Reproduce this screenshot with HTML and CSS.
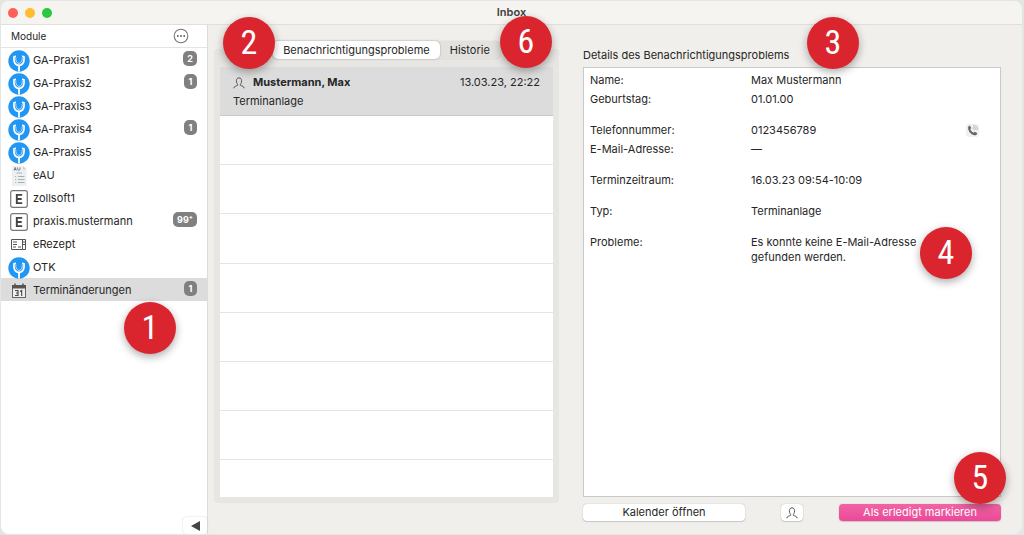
FILE: index.html
```html
<!DOCTYPE html>
<html lang="de">
<head>
<meta charset="utf-8">
<meta name="viewport" content="width=device-width, initial-scale=1">
<title>Inbox</title>
<link rel="stylesheet" href="styles.css">
</head>
<body>
<svg class="sprite" aria-hidden="true">
  <symbol id="otk" viewBox="0 0 22 22">
    <circle cx="11" cy="11" r="10.7" fill="#2196f3"/>
    <path d="M8 5.500L5.300 6C4.600 11 5.600 15.300 10.100 16.300V21.600H11.900V16.300C16.400 15.300 17.400 11 16.700 6L14 5.500V7L15.200 7.400C15.500 11 14.500 13.900 11 14.600C7.500 13.900 6.500 11 6.800 7.400L8 7Z" fill="#fff"/>
    <path d="M7.800 7.500C7.500 10.500 8.500 12.800 11 13.500C13.500 12.800 14.500 10.500 14.200 7.500" fill="none" stroke="#fff" stroke-width=".7"/>
  </symbol>
  <symbol id="person" viewBox="0 0 12 12">
    <path d="M.8 11.300C1 9.200 2.800 9.200 4.700 8.300C5 7.300 3.200 6.200 3.400 3.700C3.500 1.800 4.500.9 6 .9S8.500 1.800 8.600 3.700C8.800 6.200 7 7.300 7.300 8.300C9.200 9.200 11 9.200 11.200 11.300" fill="none" stroke="currentColor" stroke-width="1"/>
  </symbol>
  <symbol id="letter-e" viewBox="0 0 18 18">
    <rect x=".7" y=".7" width="16.600" height="16.600" rx="2" fill="#fff" stroke="#777" stroke-width="1.200"/>
    <path d="M12.200 4.900H6.800V13.100H12.200M6.800 9H11.700" fill="none" stroke="#444" stroke-width="1.900"/>
  </symbol>
</svg>

<div class="window">
  <header class="titlebar">
    <div class="lights">
      <button class="light light-close" aria-label="Schließen"></button>
      <button class="light light-min" aria-label="Minimieren"></button>
      <button class="light light-zoom" aria-label="Zoomen"></button>
    </div>
    <h1 class="title">Inbox</h1>
  </header>

  <div class="body">
    <nav class="sidebar" aria-label="Module">
      <div class="sidebar-head">
        <span>Module</span>
        <button class="more" aria-label="Mehr">
          <svg width="16" height="16" viewBox="0 0 16 16"><circle cx="8" cy="8" r="6.800" fill="none" stroke="#777" stroke-width="1.100"/><g fill="#555"><circle cx="4.800" cy="8" r=".9"/><circle cx="8" cy="8" r=".9"/><circle cx="11.200" cy="8" r=".9"/></g></svg>
        </button>
      </div>
      <ul class="modules">
        <li class="module"><svg class="icon"><use href="#otk"/></svg><span class="name">GA-Praxis1</span><span class="count">2</span></li>
        <li class="module"><svg class="icon"><use href="#otk"/></svg><span class="name">GA-Praxis2</span><span class="count">1</span></li>
        <li class="module"><svg class="icon"><use href="#otk"/></svg><span class="name">GA-Praxis3</span></li>
        <li class="module"><svg class="icon"><use href="#otk"/></svg><span class="name">GA-Praxis4</span><span class="count">1</span></li>
        <li class="module"><svg class="icon"><use href="#otk"/></svg><span class="name">GA-Praxis5</span></li>
        <li class="module">
          <svg class="icon" viewBox="0 0 22 22"><path d="M4 1H15L18.500 4.500V21H4Z" fill="#edf0f1"/><path d="M15 1V4.500H18.500" fill="#cfd4d6"/><path d="M6 5.500L7.200 2.500L8.400 5.500M6.500 4.500H8M9.700 2.500V4.500Q10.900 6.300 12 4.500V2.500" fill="none" stroke="#666" stroke-width=".8"/><path d="M8.500 8H14M10 11.500H16.500M10 14.500H16.500M10 17.500H16.500M7 11.500H8.200M7 14.500H8.200M7 17.500H8.200" stroke="#a9afb2" stroke-width="1"/></svg>
          <span class="name">eAU</span></li>
        <li class="module"><svg class="icon icon-pad"><use href="#letter-e"/></svg><span class="name">zollsoft1</span></li>
        <li class="module"><svg class="icon icon-pad"><use href="#letter-e"/></svg><span class="name">praxis.mustermann</span><span class="count">99⁺</span></li>
        <li class="module">
          <svg class="icon" viewBox="0 0 22 22"><path d="M3.500 5.500H14.500V15.500H3.500ZM14.500 5.500H17.500V15.500H14.500" fill="#fff" stroke="#555" stroke-width="1"/><path d="M5 8H9M5 10.500H9M5 13H8M10 13H13M15 8H17M15 10.500H17" stroke="#555" stroke-width="1"/></svg>
          <span class="name">eRezept</span></li>
        <li class="module"><svg class="icon"><use href="#otk"/></svg><span class="name">OTK</span></li>
        <li class="module module-active" aria-current="page">
          <svg class="icon" viewBox="0 0 22 22"><rect x="4.500" y="5.500" width="13" height="12" fill="#eee" stroke="#666"/><path d="M4 5H18V8.500H4Z" fill="#555"/><path d="M7 3.500V6M15 3.500V6" stroke="#555" stroke-width="1.500"/><path d="M7 10.500H10V13H8M10 13V15.500H7M12 11.500L13.700 10.500V16" fill="none" stroke="#444" stroke-width="1.100"/></svg>
          <span class="name">Terminänderungen</span><span class="count">1</span></li>
      </ul>
      <button class="collapse" aria-label="Seitenleiste einklappen"><svg width="9" height="10" viewBox="0 0 9 10"><path d="M0 5L9 0V10Z" fill="#444"/></svg></button>
      <span class="marker marker-1">1</span>
    </nav>

    <main class="content">
      <section class="inbox">
        <div class="tabs" role="tablist">
          <button class="tab tab-active" role="tab" aria-selected="true">Benachrichtigungsprobleme</button>
          <button class="tab" role="tab" aria-selected="false">Historie</button>
        </div>
        <ul class="messages">
          <li class="message message-active">
            <div class="message-top">
              <svg class="person"><use href="#person"/></svg>
              <strong class="message-name">Mustermann, Max</strong>
              <time datetime="2023-03-13T22:22">13.03.23, 22:22</time>
            </div>
            <div>Terminanlage</div>
          </li>
          <li class="message"></li>
          <li class="message"></li>
          <li class="message"></li>
          <li class="message"></li>
          <li class="message"></li>
          <li class="message"></li>
          <li class="message"></li>
          <li class="message message-last"></li>
        </ul>
        <span class="marker marker-2">2</span>
        <span class="marker marker-6">6</span>
      </section>

      <section class="details">
        <h2 class="details-title">Details des Benachrichtigungsproblems</h2>
        <div class="card">
          <dl class="group">
            <dt>Name:</dt><dd>Max Mustermann</dd>
            <dt>Geburtstag:</dt><dd>01.01.00</dd>
          </dl>
          <dl class="group">
            <dt>Telefonnummer:</dt>
            <dd class="phone">0123456789
              <button class="call" aria-label="Anrufen"><svg width="13" height="13" viewBox="0 0 13 13"><path d="M2.300 2.400L3.800 1.500L5.300 4L4.300 5.100C4.800 6.700 6 8 7.700 8.700L8.900 7.700L11.300 9.200L10.300 10.900C6.500 12.400 1 7 2.300 2.400Z" fill="#666"/><path d="M6.600 4.200Q8.500 4.500 8.800 6.300M7 2.700Q9.900 3.100 10.300 6M7.400 1.200Q11.400 1.800 11.800 5.700" fill="none" stroke="#aaa" stroke-width=".7"/></svg></button>
            </dd>
            <dt>E-Mail-Adresse:</dt><dd>—</dd>
          </dl>
          <dl class="group"><dt>Terminzeitraum:</dt><dd>16.03.23 09:54-10:09</dd></dl>
          <dl class="group"><dt>Typ:</dt><dd>Terminanlage</dd></dl>
          <dl class="group"><dt>Probleme:</dt><dd class="problem">Es konnte keine E-Mail-Adresse gefunden werden.</dd></dl>
        </div>
        <div class="actions">
          <button class="button button-wide">Kalender öffnen</button>
          <button class="button button-icon" aria-label="Patient öffnen"><svg class="person"><use href="#person"/></svg></button>
          <button class="button button-wide button-primary">Als erledigt markieren</button>
        </div>
        <span class="marker marker-3">3</span>
        <span class="marker marker-4">4</span>
        <span class="marker marker-5">5</span>
      </section>
    </main>
  </div>
</div>
</body>
</html>
```

FILE: styles.css
```css
* { box-sizing: border-box; }

body {
  margin: 0;
  padding: 1px 2px 1px 1px;
  min-height: 100vh;
  display: flex;
  background: #e2e6e4;
  font: 11px/15px Inter, "Liberation Sans", sans-serif;
  color: #262626;
}

button {
  margin: 0;
  padding: 0;
  border: 0;
  background: none;
  font: inherit;
  color: inherit;
}

ul, dl, dd, h1, h2 { margin: 0; padding: 0; }
ul { list-style: none; }
svg { display: block; flex: none; }
.sprite { position: absolute; width: 0; height: 0; }

.window {
  flex: 1;
  display: flex;
  flex-direction: column;
  overflow: hidden;
  border-radius: 8px;
  background: #f0efeb;
}

.titlebar {
  display: grid;
  grid-template-columns: 1fr auto 1fr;
  align-items: center;
  height: 24px;
  padding: 0 7px;
  background: #f5f4f0;
  border-bottom: 1px solid #e0dfdc;
}
.lights { display: flex; gap: 7px; }
.light { width: 10px; height: 10px; border-radius: 50%; }
.light-close { background: #ff5f57; }
.light-min { background: #febc2e; }
.light-zoom { background: #28c840; }
.title { font-size: 11px; line-height: 15px; font-weight: 600; color: #404040; }

.body { flex: 1; display: flex; }

.sidebar {
  position: relative;
  flex: none;
  width: 207px;
  display: flex;
  flex-direction: column;
  background: #fff;
  border-right: 1px solid #dcdcda;
}
.sidebar-head {
  display: flex;
  align-items: center;
  justify-content: space-between;
  height: 23px;
  padding: 0 18px 0 10px;
  border-bottom: 1px solid #e4e4e4;
  font-size: 10px;
}
.module {
  display: flex;
  align-items: center;
  height: 23px;
  padding: 2px 10px 0 7px;
  gap: 3px;
}
.module-active { background: #dcdcdc; }
.icon { width: 22px; height: 22px; }
.icon-pad { padding: 2px; }
.name { flex: 1; }
.count {
  align-self: flex-start;
  margin-top: 1px;
  min-width: 13px;
  padding: 0 4px;
  border-radius: 5px;
  background: #808080;
  color: #fff;
  font-size: 9px;
  font-weight: 700;
  line-height: 15px;
  text-align: center;
}
.collapse {
  display: grid;
  place-items: center;
  width: 24px;
  height: 17px;
  margin: auto 0 0 auto;
  border-radius: 4px;
  box-shadow: 0 0 2px #ccc;
}

.content {
  flex: 1;
  display: grid;
  grid-template-columns: 345fr 418fr;
  gap: 24px;
  padding: 16px 21px 13px 6px;
}

.inbox {
  position: relative;
  display: flex;
  flex-direction: column;
  margin: 8px 0 18px;
  padding: 0 6px 6px;
  border-radius: 4px;
  background: #e7e6e3;
}
.tabs {
  display: flex;
  align-self: center;
  margin-top: -8px;
  margin-bottom: 8px;
  border-radius: 5px;
  background: #e3e2df;
  box-shadow: 0 0 1px #aaa;
}
.tab { height: 18px; padding: 0 10px; border-radius: 5px; }
.tab-active { background: #fff; box-shadow: 0 0 2px #999; }

.messages {
  flex: 1;
  display: flex;
  flex-direction: column;
  background: #fff;
}
.message {
  flex: 49 1 0;
  padding: 8px 13px 0;
  border-bottom: 1px solid #e4e4e4;
}
.message-active { background: #dcdcdc; border-color: #c9c9c9; }
.message-last { flex-grow: 35; border: 0; }
.message-top { display: flex; align-items: center; margin-bottom: 4px; }
.message-name { flex: 1; margin-left: 8px; font-weight: 700; }
.person { width: 12px; height: 12px; color: #555; }

.details {
  position: relative;
  display: flex;
  flex-direction: column;
}
.details-title { margin: 7px 0 4px; font-size: 11px; font-weight: 400; }
.card {
  flex: 1;
  display: flex;
  flex-direction: column;
  gap: 16px;
  padding: 5px 21px 5px 6px;
  border: 1px solid #c9c9c9;
  background: #fff;
}
.group {
  display: grid;
  grid-template-columns: 161px 1fr;
  row-gap: 4px;
}
.phone { display: flex; align-items: center; justify-content: space-between; }
.call { border-radius: 3px; background: #f0f0f0; }
.problem { max-width: 176px; }

.actions {
  display: flex;
  justify-content: space-between;
  margin-top: 7px;
}
.button {
  display: grid;
  place-items: center;
  height: 17px;
  border-radius: 4px;
  background: #fff;
  box-shadow: 0 0 1px #999, 0 1px 1px #ccc;
}
.button-wide { width: 162px; }
.button-icon { width: 22px; }
.button-primary {
  background: linear-gradient(#f064a4, #ec4899);
  color: #fff;
}

.marker {
  position: absolute;
  width: 52px;
  height: 52px;
  border-radius: 50%;
  background: #da252e;
  box-shadow: 0 3px 8px #0005;
  color: #fff;
  font: 34px/50px "Roboto Condensed", "Liberation Sans Narrow", "DejaVu Sans Condensed", sans-serif;
  text-align: center;
}
.marker-1 { left: 123px; top: 277px; }
.marker-2 { left: 9px; top: -32px; }
.marker-6 { right: 7px; top: -33px; }
.marker-3 { left: 224px; top: -24px; }
.marker-4 { left: 337px; top: 186px; }
.marker-5 { right: -5px; bottom: 17px; }
```
